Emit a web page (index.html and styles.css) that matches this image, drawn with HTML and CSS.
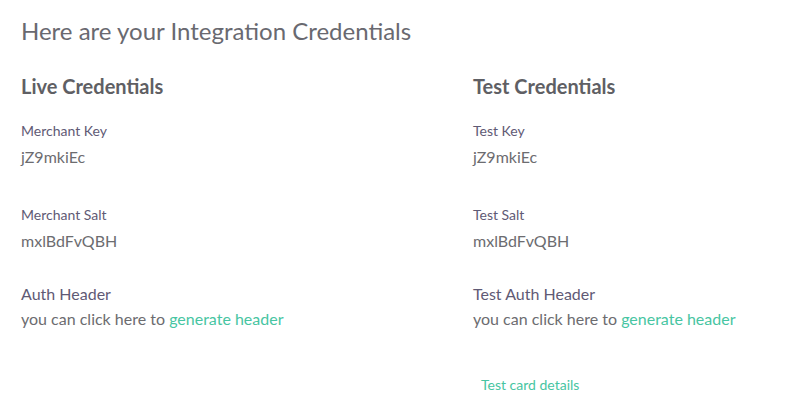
FILE: index.html
```html
<!DOCTYPE html>
<html>
<head>
<meta charset="utf-8">
<link rel="stylesheet" href="styles.css">
</head>
<body>
<div class="page">
  <h1 class="title">Here are your Integration Credentials</h1>
  <div class="cols">
    <section class="col">
      <h2 class="heading">Live Credentials</h2>
      <div class="field">
        <div class="label">Merchant Key</div>
        <div class="value">jZ9mkiEc</div>
      </div>
      <div class="field">
        <div class="label">Merchant Salt</div>
        <div class="value">mxlBdFvQBH</div>
      </div>
      <div class="auth">
        <div class="auth-label">Auth Header</div>
        <div class="value">you can click here to <a class="link" href="#">generate header</a></div>
      </div>
    </section>
    <section class="col">
      <h2 class="heading">Test Credentials</h2>
      <div class="field">
        <div class="label">Test Key</div>
        <div class="value">jZ9mkiEc</div>
      </div>
      <div class="field">
        <div class="label">Test Salt</div>
        <div class="value">mxlBdFvQBH</div>
      </div>
      <div class="auth">
        <div class="auth-label">Test Auth Header</div>
        <div class="value">you can click here to <a class="link" href="#">generate header</a></div>
      </div>
      <a class="card-link" href="#">Test card details</a>
    </section>
  </div>
</div>
</body>
</html>
```

FILE: styles.css
```css
html, body {
  margin: 0;
  padding: 0;
  background: #ffffff;
}
body {
  font-family: Lato, "Open Sans", sans-serif;
  color: #666666;
}
.page {
  padding: 16px 0 0 21px;
}
.title {
  margin: 0;
  font-size: 24px;
  font-weight: 400;
  line-height: 30px;
  color: #696970;
}
.cols {
  display: grid;
  grid-template-columns: 452px 1fr;
  margin-top: 28px;
}
.heading {
  margin: 0;
  font-size: 20px;
  font-weight: 700;
  line-height: 24px;
  color: #5f5f64;
}
.field {
  margin-top: 39px;
}
.heading + .field {
  margin-top: 24px;
}
.label {
  font-size: 14px;
  line-height: 18px;
  color: #5f5a75;
}
.value {
  margin-top: 7px;
  font-size: 16px;
  line-height: 20px;
  color: #6c6c70;
}
.auth {
  margin-top: 33px;
}
.auth-label {
  font-size: 16px;
  line-height: 20px;
  color: #5f5a75;
}
.auth .value {
  margin-top: 5px;
}
.link {
  color: #47c5a2;
  text-decoration: none;
}
.card-link {
  display: inline-block;
  margin-top: 47px;
  margin-left: 8px;
  font-size: 14px;
  line-height: 18px;
  color: #47c5a2;
  text-decoration: none;
}
```
